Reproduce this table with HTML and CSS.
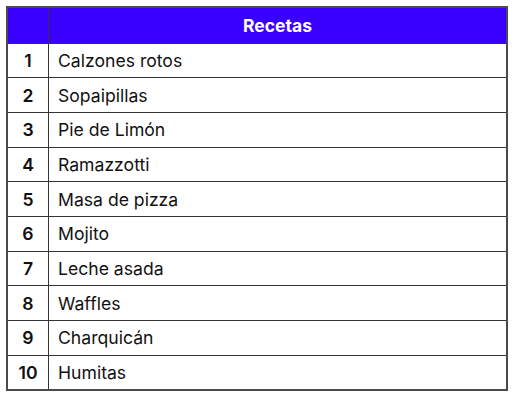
FILE: index.html
```html
<!DOCTYPE html>
<html lang="es">
<head>
<meta charset="utf-8">
<link rel="stylesheet" href="styles.css">
</head>
<body>
<table class="recipes">
  <thead>
    <tr><th class="num"></th><th class="name">Recetas</th></tr>
  </thead>
  <tbody>
    <tr><td class="num">1</td><td class="name">Calzones rotos</td></tr>
    <tr><td class="num">2</td><td class="name">Sopaipillas</td></tr>
    <tr><td class="num">3</td><td class="name">Pie de Limón</td></tr>
    <tr><td class="num">4</td><td class="name">Ramazzotti</td></tr>
    <tr><td class="num">5</td><td class="name">Masa de pizza</td></tr>
    <tr><td class="num">6</td><td class="name">Mojito</td></tr>
    <tr><td class="num">7</td><td class="name">Leche asada</td></tr>
    <tr><td class="num">8</td><td class="name">Waffles</td></tr>
    <tr><td class="num">9</td><td class="name">Charquicán</td></tr>
    <tr><td class="num">10</td><td class="name">Humitas</td></tr>
  </tbody>
</table>
</body>
</html>
```

FILE: styles.css
```css
html, body {
  margin: 0;
  background: #ffffff;
}
body {
  padding: 6px;
  font-family: Inter, "Liberation Sans", sans-serif;
  color: #111111;
}
.recipes {
  border-collapse: collapse;
  width: 502px;
  border: 2px solid #4a4a4a;
}
.recipes th, .recipes td {
  border: 1px solid #333333;
  padding: 0;
}
.recipes thead th {
  background: #3a00ff;
  color: #ffffff;
  font-weight: 700;
  font-size: 17.5px;
  height: 34.5px;
  text-align: center;
}
.recipes tbody td {
  height: 33.7px;
  font-size: 17.6px;
}
.recipes .num {
  width: 40px;
  text-align: center;
  font-weight: 600;
}
.recipes tbody .name {
  padding-left: 9px;
  font-weight: 400;
}
```
